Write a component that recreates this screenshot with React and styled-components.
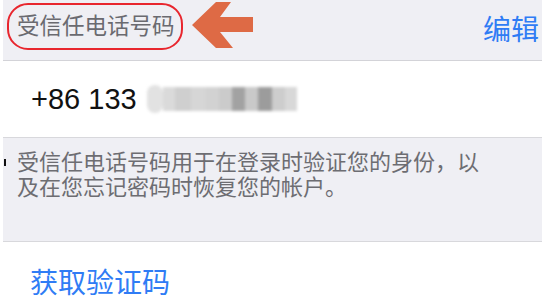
import React from "react";
import styled, { createGlobalStyle } from "styled-components";

const Global = createGlobalStyle`
  html, body { margin: 0; padding: 0; background: #ffffff; }
  body { width: 542px; height: 306px; overflow: hidden;
    font-family: "Noto Sans CJK SC", "Noto Sans", sans-serif; }
`;

const Page = styled.div`
  width: 542px;
  height: 306px;
  display: flex;
  flex-direction: column;
  background: #ffffff;
  padding-left: 3px;
  box-sizing: border-box;
  overflow: hidden;
`;

const Header = styled.div`
  height: 60px;
  flex: none;
  display: flex;
  align-items: center;
  background: #efeff4;
  border-bottom: 1px solid #d3d3d8;
  padding-left: 4px;
  padding-right: 3px;
`;

const TitleBox = styled.div`
  height: 47px;
  width: 176px;
  box-sizing: border-box;
  display: inline-flex;
  align-items: center;
  padding: 0 0 5px 8px;
  border: 2px solid #e8262e;
  border-radius: 21px;
  font-size: 22.5px;
  color: #6a6a70;
  margin-top: -7px;
  white-space: nowrap;
`;

const Arrow = styled.svg`
  margin-left: 9px;
  margin-top: -9px;
  flex: none;
`;

const Spacer = styled.div`
  flex: 1;
`;

const HeaderAction = styled.div`
  font-size: 28px;
  color: #2f7cf5;
  margin-top: -5px;
`;

const PhoneRow = styled.div`
  height: 76px;
  flex: none;
  display: flex;
  align-items: center;
  padding-left: 28px;
  background: #ffffff;
  border-bottom: 1px solid #d8d8dc;
`;

const PhoneText = styled.span`
  font-family: "Liberation Sans", Arial, sans-serif;
  font-size: 29px;
  color: #111111;
`;

const Masked = styled.div`
  display: flex;
  align-items: center;
  margin-left: 10px;
  height: 28px;
  filter: blur(1.5px);
`;

const MaskBlock = styled.div`
  width: ${(p) => p.$w}px;
  height: ${(p) => p.$h || 24}px;
  background: ${(p) => p.$c};
  border-radius: ${(p) => p.$r || 0}px;
`;

const Desc = styled.div`
  position: relative;
  height: 104px;
  flex: none;
  box-sizing: border-box;
  background: #efeff4;
  border-bottom: 1px solid #d8d8dc;
  padding: 10px 55px 0 14px;
  font-size: 22px;
  line-height: 24.5px;
  color: #6d6d72;
`;

const Caret = styled.span`
  position: absolute;
  left: 1px;
  top: 21px;
  width: 2px;
  height: 7px;
  background: #111111;
`;

const ActionRow = styled.div`
  flex: 1;
  background: #ffffff;
  padding: 19px 0 0 27px;
`;

const ActionLink = styled.span`
  font-size: 28px;
  color: #2f7cf5;
`;

const maskBlocks = [
  { w: 16, c: "#e2e2e2", r: 12, h: 28 },
  { w: 12, c: "#dadada" },
  { w: 16, c: "#cfcfcf" },
  { w: 14, c: "#d6d6d6" },
  { w: 14, c: "#d2d2d2" },
  { w: 13, c: "#cbcbcb" },
  { w: 13, c: "#a2a2a2" },
  { w: 13, c: "#c9c9c9" },
  { w: 14, c: "#9c9c9c" },
  { w: 13, c: "#cdcdcd" },
  { w: 12, c: "#d8d8d8" },
];

export default function App() {
  return (
    <>
      <Global />
      <Page>
        <Header>
          <TitleBox>受信任电话号码</TitleBox>
          <Arrow width="62" height="47" viewBox="0 0 62 47">
            <polygon
              points="0,23 24,0 39,0 28,15 61,15 61,30 28,30 41,46 24,46"
              fill="#de6a45"
            />
          </Arrow>
          <Spacer />
          <HeaderAction>编辑</HeaderAction>
        </Header>
        <PhoneRow>
          <PhoneText>+86 133</PhoneText>
          <Masked>
            {maskBlocks.map((b, i) => (
              <MaskBlock key={i} $w={b.w} $c={b.c} $r={b.r} $h={b.h} />
            ))}
          </Masked>
        </PhoneRow>
        <Desc>
          <Caret />
          受信任电话号码用于在登录时验证您的身份，以及在您忘记密码时恢复您的帐户。
        </Desc>
        <ActionRow>
          <ActionLink>获取验证码</ActionLink>
        </ActionRow>
      </Page>
    </>
  );
}
